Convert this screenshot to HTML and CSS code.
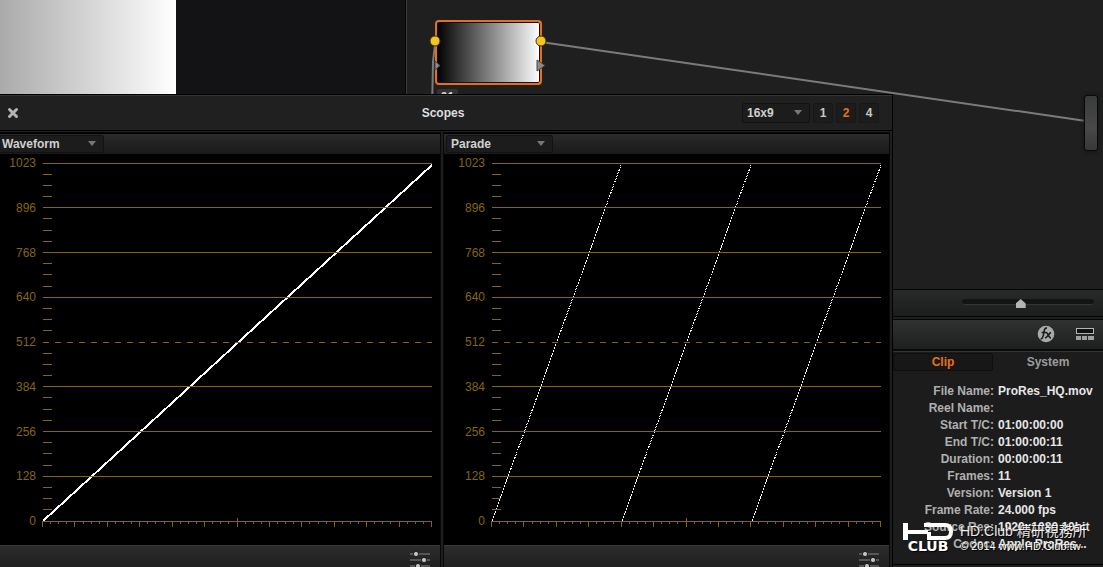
FILE: index.html
```html
<!DOCTYPE html>
<html lang="en">
<head>
<meta charset="utf-8">
<title>Scopes</title>
<link rel="stylesheet" href="styles.css">
</head>
<body>
<div class="app">
  <section class="viewer" aria-label="Viewer"><div class="frame"></div></section>
  <div class="side">
    <section class="canvas" aria-label="Nodes">
      <svg class="wires" aria-hidden="true">
        <path d="M28 44 L26 62 L25 110" />
        <path d="M134 42 L679 121" />
      </svg>
      <div class="node">
        <svg class="ports" width="118" height="64" viewBox="0 0 118 64" aria-hidden="true">
          <path class="key" d="M6 41 L11 45.500 L6 50Z"/>
          <path class="key" d="M108 40 L116 45.500 L108 51Z"/>
          <circle class="port" cx="6" cy="21" r="5"/>
          <circle class="port" cx="112" cy="21" r="5"/>
        </svg>
        <span class="node-label">01</span>
      </div>
      <div class="output"></div>
    </section>
    <div class="zoombar">
      <input class="zoom" type="range" min="0" max="100" value="44" aria-label="Zoom">
    </div>
    <div class="toolbar">
      <button class="icon" aria-label="Effects">
        <svg width="18" height="18" viewBox="0 0 18 18"><circle cx="9" cy="9" r="8.300" fill="#aaa"/><path d="M10 3.200C7.500 2.600 7.300 5 6.800 8S6 14 3.500 14M4.500 7.500H9.500M9 7.500C11.500 7.500 11 13 14 13M14 7.500C12 8 10.500 12.500 8 13" fill="none" stroke="#1c1c1c" stroke-width="1.600"/></svg>
      </button>
      <button class="icon" aria-label="Layout">
        <svg width="18" height="14" viewBox="0 0 18 14" shape-rendering="crispEdges"><path d="M.5 1.500H17.500V6.500H.5Z" fill="#111" stroke="#b4b4b4"/><path d="M0 9H5V13H0ZM6 9H11V13H6ZM12 9H18V13H12Z" fill="#a0a0a0"/></svg>
      </button>
    </div>
    <section class="info">
      <div class="tabs">
        <button class="tab active">Clip</button>
        <button class="tab">System</button>
      </div>
      <dl class="meta">
        <dt>File Name:</dt><dd>ProRes_HQ.mov</dd>
        <dt>Reel Name:</dt><dd></dd>
        <dt>Start T/C:</dt><dd>01:00:00:00</dd>
        <dt>End T/C:</dt><dd>01:00:00:11</dd>
        <dt>Duration:</dt><dd>00:00:00:11</dd>
        <dt>Frames:</dt><dd>11</dd>
        <dt>Version:</dt><dd>Version 1</dd>
        <dt>Frame Rate:</dt><dd>24.000 fps</dd>
        <dt>Source Res:</dt><dd>1920x1080 10bit</dd>
        <dt>Codec:</dt><dd>Apple ProRes...</dd>
      </dl>
    </section>
  </div>

  <section class="scopes">
    <header class="titlebar">
      <button class="close" aria-label="Close"><svg width="12" height="12" viewBox="0 0 12 12"><path d="M2.500 2.500L9.500 9.500M9.500 2.500L2.500 9.500" stroke="#b4b4b4" stroke-width="3" stroke-linecap="round"/></svg></button>
      <h1>Scopes</h1>
      <div class="controls">
        <span class="select ratio"><select aria-label="Aspect ratio"><option>16x9</option></select></span>
        <button class="count">1</button>
        <button class="count active">2</button>
        <button class="count">4</button>
      </div>
    </header>
    <div class="panels">
      <section class="panel">
        <div class="panel-head"><span class="select"><select aria-label="Left scope"><option>Waveform</option></select></span></div>
        <div class="graph">
          <ol class="scale"><li>1023</li><li>896</li><li>768</li><li>640</li><li>512</li><li>384</li><li>256</li><li>128</li><li>0</li></ol>
          <div class="plot" data-traces="1"></div>
        </div>
        <footer class="panel-foot"><button class="icon" aria-label="Left scope settings"><svg width="20" height="18" viewBox="0 0 20 18"><path d="M0 4H20M0 10H20M0 16H20" stroke="#565656" stroke-width="2"/><g fill="#c4c4c4" stroke="#1c1c1c"><circle cx="6" cy="4" r="2.600"/><circle cx="14" cy="10" r="2.600"/><circle cx="8" cy="16" r="2.600"/></g></svg></button></footer>
      </section>
      <section class="panel">
        <div class="panel-head"><span class="select"><select aria-label="Right scope"><option>Parade</option></select></span></div>
        <div class="graph">
          <ol class="scale"><li>1023</li><li>896</li><li>768</li><li>640</li><li>512</li><li>384</li><li>256</li><li>128</li><li>0</li></ol>
          <div class="plot" data-traces="3"></div>
        </div>
        <footer class="panel-foot"><button class="icon" aria-label="Right scope settings"><svg width="20" height="18" viewBox="0 0 20 18"><path d="M0 4H20M0 10H20M0 16H20" stroke="#565656" stroke-width="2"/><g fill="#c4c4c4" stroke="#1c1c1c"><circle cx="6" cy="4" r="2.600"/><circle cx="14" cy="10" r="2.600"/><circle cx="8" cy="16" r="2.600"/></g></svg></button></footer>
      </section>
    </div>
  </section>

  <div class="watermark">
    <div class="brand">
      <svg width="50" height="17" viewBox="0 0 50 17" aria-hidden="true"><path d="M0 0H5V7H25V11H5V17H0Z" fill="#fff"/><path d="M21 2H42Q48 2 48 8.500T42 15H26V9" fill="none" stroke="#fff" stroke-width="4"/></svg>
      <span class="club">CLUB</span>
    </div>
    <div class="credit">
      <span class="credit-name">HD.Club 精研視務所</span>
      <span class="credit-url">© 2014 www.HD.Club.tw</span>
    </div>
  </div>
</div>
<script src="scopes.js"></script>
</body>
</html>
```

FILE: styles.css
```css
* { box-sizing: border-box; }
body {
  margin: 0;
  background: #1f1f1f;
  color: #d8d8d8;
  font: bold 12px/17px "Liberation Sans", "Noto Sans CJK TC", sans-serif;
}
button, select { font: inherit; color: inherit; margin: 0; padding: 0; border: 0; background: none; }
h1, ol, dl, dd { margin: 0; padding: 0; }

.app { position: relative; display: flex; height: 100vh; overflow: hidden; }
.viewer { width: 36.8%; background: #131315; border-right: 1px solid #050505; }
.frame { width: 176px; height: 120px; background: linear-gradient(90deg, #aaa, #fff); }
.side { flex: 1; display: flex; flex-direction: column; border-left: 1px solid #3c3c3c; min-width: 0; }

.canvas { position: relative; flex: 1; background: #1f1f1f; overflow: hidden; }
.wires { position: absolute; left: 0; top: 0; width: 100%; height: 100%; }
.wires path { fill: none; stroke: #7b7b7b; stroke-width: 2; }
.node {
  position: absolute; left: 28px; top: 20px; width: 107px; height: 65px;
  border: 2px solid #e6701a; border-radius: 4px;
  background: linear-gradient(90deg, #000, #fff);
  box-shadow: inset 0 0 0 1px #111;
}
.ports { position: absolute; left: -8px; top: -2px; }
.port { fill: #f5c71c; stroke: #3a3320; }
.key { fill: #8b8b8b; stroke: #444; }
.node-label {
  position: absolute; left: 0; top: 67px; width: 21px; height: 16px;
  background: #333; border-radius: 2px; text-align: center; line-height: 17px;
}
.output {
  position: absolute; right: 5px; top: 95px; width: 14px; height: 56px;
  background: linear-gradient(#3a3b3b, #484848 60%, #383838);
  border: 1px solid #080808; border-radius: 3px; box-shadow: 0 0 4px #111;
}

.zoombar {
  display: flex; justify-content: flex-end; align-items: center;
  height: 28px; padding: 0 9px 2px 0;
  background: linear-gradient(#282929, #1c1d1d);
  border-top: 1px solid #050505; border-bottom: 1px solid #050505;
}
.zoom { appearance: none; width: 132px; height: 16px; margin: 0; background: none; }
.zoom::-webkit-slider-runnable-track {
  height: 6px; border-radius: 3px; background: #141414; border-bottom: 1px solid #353535;
}
.zoom::-webkit-slider-thumb {
  appearance: none; width: 10px; height: 9px; margin-top: 0;
  background: #b4b4b4; clip-path: polygon(50% 0, 100% 50%, 100% 100%, 0 100%, 0 50%);
}
.toolbar {
  display: flex; justify-content: flex-end; align-items: center; gap: 21px;
  height: 32px; margin-top: 2px; padding: 0 9px 1px 0;
  background: linear-gradient(#303232, #1e1f1f);
  border-top: 1px solid #050505; border-bottom: 2px solid #0a0a0a;
}
.icon { display: flex; }
.info {
  align-self: flex-end; width: 210px; padding-bottom: 11px;
  background: #1c1c1c; border-top: 1px solid #333; border-bottom: 1px solid #000;
  margin-bottom: 2px;
}
.tabs { display: grid; grid-template-columns: 100px 1fr; padding-top: 1px; }
.tab { height: 18px; color: #9c9c9c; }
.tab.active { color: #ec7014; background: #171717; border: 1px solid #0f0f0f; border-radius: 2px; }
.meta { display: grid; grid-template-columns: 101px 1fr; column-gap: 4px; grid-auto-rows: 17px; padding-top: 12px; white-space: nowrap; }
.meta dt { text-align: right; color: #b0b0b0; }
.meta dd { color: #e6e6e6; }

.scopes {
  position: absolute; left: -5px; right: 211px; top: 94px; bottom: 0;
  display: flex; flex-direction: column;
  background: #1e1e1e; border-top: 1px solid #000; box-shadow: 1px 0 0 #000;
}
.titlebar {
  display: grid; grid-template-columns: 1fr auto 1fr; align-items: center;
  height: 36px; padding: 0 13px 0 12px;
  background: #202020; border-top: 1px solid #343434; border-bottom: 1px solid #000;
}
.titlebar h1 { font-size: 12px; color: #dedede; }
.close { display: flex; justify-self: start; }
.controls { display: flex; justify-content: flex-end; gap: 3px; }
.select { position: relative; display: inline-flex; }
.select select {
  appearance: none; width: 107px; height: 18px; padding-left: 4px;
  background: #1c1c1c; border: 1px solid #121212; border-radius: 2px; color: #d0d0d0;
}
.select::after {
  content: ""; position: absolute; right: 8px; top: 50%; margin-top: -3px;
  border: 4px solid transparent; border-top: 5px solid #777; border-bottom: 0; pointer-events: none;
}
.ratio select { width: 68px; height: 20px; }
.count { width: 20px; height: 20px; background: #1c1c1c; border: 1px solid #171717; border-radius: 2px; color: #c6c6c6; }
.count.active { color: #ec7014; }

.panels { flex: 1; display: grid; grid-template-columns: 1fr 1fr; gap: 4px; padding: 2px 3px 0 0; min-height: 0; }
.panel { display: flex; flex-direction: column; border-top: 1px solid #000; min-width: 0; box-shadow: 0 0 0 1px #080808; }
.panel-head { display: flex; height: 20px; padding: 1px 2px; background: linear-gradient(#2a2a2a, #1a1a1a); }
.graph { flex: 1; display: grid; grid-template-columns: 47px 1fr; padding: 9px 8px 24px 0; background: #000; min-height: 0; }
.scale {
  display: flex; flex-direction: column; justify-content: space-between;
  padding-right: 6px; list-style: none; text-align: right; font-weight: normal; color: #846513;
}
.scale li { height: 0; line-height: 0; }
.plot svg { display: block; width: 100%; height: 100%; overflow: visible; }
.grid { fill: none; stroke: #84650f; shape-rendering: crispEdges; }
.grid-dashed { stroke-dasharray: 6 6; }
.trace { fill: none; stroke: #fff; stroke-width: 2; shape-rendering: crispEdges; }
.trace-dotted { stroke-width: 1; stroke-dasharray: 2 1; }
.panel-foot {
  display: flex; justify-content: flex-end; height: 22px; padding: 4px 10px 0; overflow: hidden;
  background: linear-gradient(#2c2c2c, #202020); border-top: 1px solid #383838;
}

.watermark {
  position: absolute; right: 21px; bottom: 14px; display: flex; gap: 7px;
  color: #fff; text-shadow: 1px 1px 1px #000; pointer-events: none; white-space: nowrap;
}
.brand { display: flex; flex-direction: column; width: 50px; }
.club { font: bold 14px/13px "DejaVu Sans", sans-serif; text-align: center; }
.credit { display: flex; flex-direction: column; width: 122px; font-weight: normal; }
.credit-name { font-size: 14px; line-height: 16px; opacity: 0.9; }
.credit-url { font-size: 11px; line-height: 14px; }
```

FILE: scopes.js
```js
const NS = "http://www.w3.org/2000/svg";

function addPath(svg, d, className) {
  const path = document.createElementNS(NS, "path");
  path.setAttribute("d", d);
  path.setAttribute("class", className);
  svg.append(path);
}

function draw(plot) {
  plot.replaceChildren();
  const w = Math.round(plot.clientWidth);
  const h = Math.round(plot.clientHeight);
  const svg = document.createElementNS(NS, "svg");
  const traces = Number(plot.dataset.traces);
  const step = w / traces;

  for (let i = 0; i < traces; i++) {
    const x = i * step;
    addPath(svg, `M${x + 1} ${h} L${x + step} 2`, traces > 1 ? "trace trace-dotted" : "trace");
  }

  // Horizontal levels with short marks between them
  let lines = "";
  for (let i = 0; i <= 32; i++) {
    const y = Math.floor(i * h / 32) + 0.5;
    if (i === 16) continue;
    lines += `M1 ${y}H${i % 4 ? 10 : w}`;
  }
  addPath(svg, lines, "grid");
  addPath(svg, `M1 ${Math.floor(h / 2) + 0.5}H${w}`, "grid grid-dashed");

  // Bottom ruler
  let ticks = "";
  for (let i = 0; i <= 48; i++) {
    const x = Math.round(i * (w - 1) / 48) + 0.5;
    ticks += `M${x} ${i === 24 ? h - 3 : h}V${h + (i % 4 ? 3 : 6)}`;
  }
  addPath(svg, ticks, "grid");
  plot.append(svg);
}

function drawAll() {
  document.querySelectorAll(".plot").forEach(draw);
}

window.addEventListener("resize", drawAll);
drawAll();
```
